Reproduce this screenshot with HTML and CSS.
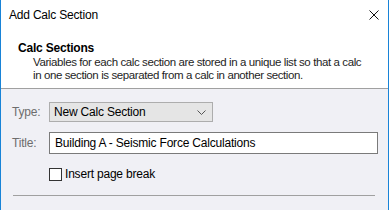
FILE: index.html
```html
<!DOCTYPE html>
<html lang="en">
<head>
<meta charset="UTF-8">
<title>Add Calc Section</title>
<link rel="stylesheet" href="styles.css">
</head>
<body>
    <div class="dialog">
        <div class="titlebar">
            <span class="title">Add Calc Section</span>
            <svg class="close" width="10" height="10" viewBox="0 0 10 10">
                <path d="M0.5 0.5 L9.5 9.5 M9.5 0.5 L0.5 9.5" stroke="#111" stroke-width="1" fill="none"/>
            </svg>
        </div>
        <div class="header">
            <h2>Calc Sections</h2>
            <p>Variables for each calc section are stored in a unique list so that a calc<br>in one section is separated from a calc in another section.</p>
        </div>
        <div class="body">
            <div class="row">
                <span class="label">Type:</span>
                <div class="combo">
                    <span>New Calc Section</span>
                    <svg width="9" height="5" viewBox="0 0 9 5">
                        <path d="M0.5 0.5 L4.5 4.5 L8.5 0.5" stroke="#555" stroke-width="1" fill="none"/>
                    </svg>
                </div>
            </div>
            <div class="row">
                <span class="label">Title:</span>
                <input class="text-input" type="text" value="Building A - Seismic Force Calculations">
            </div>
            <label class="check">
                <span class="box"></span>
                <span>Insert page break</span>
            </label>
            <div class="separator"></div>
        </div>
    </div>
</body>
</html>
```

FILE: styles.css
```css
body {
    margin: 0;
    background-color: #f0f0f5;
}
.dialog {
    width: 389px;
    height: 210px;
    box-sizing: border-box;
    border-left: 1px solid #1883d7;
    border-right: 1px solid #1883d7;
    font-family: 'Liberation Sans', Arial, sans-serif;
    font-size: 12px;
    letter-spacing: -0.2px;
    color: #000;
    background-color: #f0f0f5;
}
.titlebar {
    height: 30px;
    display: flex;
    align-items: center;
    justify-content: space-between;
    padding: 0 9px 0 8px;
    background-color: #fff;
}
.title {
    font-size: 12px;
    color: #000;
}
.close {
    display: block;
}
.header {
    background-color: #fff;
    padding: 11px 10px 6px 17px;
    border-bottom: 1px solid #a0a0a0;
}
h2 {
    margin: 0;
    font-size: 12px;
    line-height: 15px;
    font-weight: bold;
}
.header p {
    margin: 0;
    padding-left: 15px;
    font-size: 11.5px;
    letter-spacing: -0.4px;
    line-height: 13px;
    white-space: nowrap;
    color: #1e1e1e;
}
.body {
    padding: 13px 10px 0 11px;
}
.row {
    display: flex;
    align-items: center;
    margin-bottom: 10px;
}
.label {
    width: 37px;
    color: #6d6d6d;
}
.combo {
    width: 164px;
    height: 20px;
    box-sizing: border-box;
    display: flex;
    align-items: center;
    justify-content: space-between;
    padding: 0 6px 0 4px;
    background-color: #e5e5e5;
    border: 1px solid #adadad;
}
.combo svg {
    display: block;
}
.text-input {
    flex: 1;
    height: 22px;
    box-sizing: border-box;
    margin: 0;
    padding: 0 5px;
    border: 1px solid #7a7a7a;
    background-color: #fff;
    font-family: inherit;
    font-size: 12px;
    letter-spacing: -0.2px;
    color: #000;
    outline: none;
}
.check {
    display: flex;
    align-items: center;
    gap: 3px;
    margin: 13px 0 0 37px;
}
.box {
    width: 13px;
    height: 13px;
    box-sizing: border-box;
    border: 1px solid #333;
    background-color: #fff;
}
.separator {
    height: 1px;
    margin: 14px 3px 0 1px;
    background-color: #a0a0a0;
}
```
